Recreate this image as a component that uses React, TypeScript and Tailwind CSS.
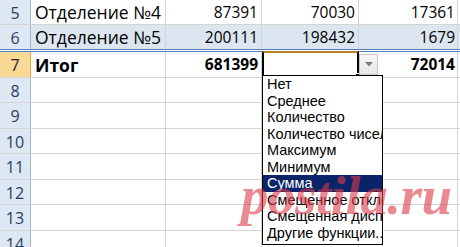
import React from "react";

type Row = {
  n: number;
  h: string;
  b?: string;
  c?: string;
  d?: string;
  e?: string;
};

const rows: Row[] = [
  { n: 5, h: "h-[25px]", b: "Отделение №4", c: "87391", d: "70030", e: "17361" },
  { n: 6, h: "h-[27px]", b: "Отделение №5", c: "200111", d: "198432", e: "1679" },
  { n: 7, h: "h-[26px]" },
  { n: 8, h: "h-[25px]" },
  { n: 9, h: "h-[26px]" },
  { n: 10, h: "h-[25px]" },
  { n: 11, h: "h-[26px]" },
  { n: 12, h: "h-[25px]" },
  { n: 13, h: "h-[26px]" },
  { n: 14, h: "h-[25px]" },
];

const menu = [
  "Нет",
  "Среднее",
  "Количество",
  "Количество чисел",
  "Максимум",
  "Минимум",
  "Сумма",
  "Смещенное отклонение",
  "Смещенная дисперсия",
  "Другие функции...",
];

const cell = "border-r border-[#d4d4d4] flex items-center pt-[1px]";

export default function App() {
  return (
    <div className="relative w-[460px] h-[247px] overflow-hidden bg-white font-['Open_Sans',Arial,sans-serif] text-[15.5px] text-black">
      {rows.map((r) => {
        const total = r.n === 7;
        const band = r.n === 6;
        return (
          <div
            key={r.n}
            className={`flex ${r.h} ${
              band
                ? "border-b-[3px] border-double border-[#4f81bd]"
                : "border-b border-[#d4d4d4]"
            }`}
          >
            {/* row header */}
            <div
              className={`w-[31px] shrink-0 flex items-center justify-center pt-[1px] border-r text-[16px] ${
                total
                  ? "bg-[#f9d995] border-[#e8a53e] text-[#222]"
                  : "bg-[#dde8f4] border-[#9eb6ce] text-[#27405e]"
              }`}
            >
              {r.n}
            </div>
            <div className={`flex flex-1 ${band ? "bg-[#dce6f1]" : ""}`}>
              <div className={`${cell} w-[135px] pl-[4px] text-[17.5px] ${total ? "font-bold" : ""}`}>
                {total ? "Итог" : r.b}
              </div>
              <div className={`${cell} w-[96px] justify-end pr-[3px] ${total ? "font-bold" : ""}`}>
                {total ? "681399" : r.c}
              </div>
              {total ? (
                <div className="relative w-[97px] -mt-[1px] border-2 border-black border-t-[#b8822e]">
                  <div className="absolute right-[-3px] bottom-[-3px] w-[5px] h-[5px] bg-black border border-white" />
                  {/* dropdown button */}
                  <div className="absolute left-[calc(100%+2px)] top-[1px] w-[19px] h-[21px] border border-[#c6c6c6] bg-gradient-to-b from-[#f7f7f7] to-[#e6e6e6] flex items-center justify-center">
                    <svg width="8" height="5" viewBox="0 0 8 5">
                      <path d="M0 0h8L4 4.5z" fill="#7a7a7a" />
                    </svg>
                  </div>
                  {/* function list */}
                  <div className="absolute left-[-2px] top-full z-10 w-[121px] h-[170px] bg-white border border-black overflow-hidden font-['Liberation_Sans',Tahoma,sans-serif] text-[14.5px]">
                    {menu.map((m) => (
                      <div
                        key={m}
                        className={`h-[16.5px] leading-[16.5px] pl-[4px] whitespace-nowrap ${
                          m === "Сумма" ? "bg-[#0a246a] text-white" : ""
                        }`}
                      >
                        {m}
                      </div>
                    ))}
                  </div>
                </div>
              ) : (
                <div className={`${cell} w-[97px] justify-end pr-[3px]`}>{r.d}</div>
              )}
              <div className={`${cell} w-[99px] justify-end pr-[2px] ${total ? "font-bold" : ""}`}>
                {total ? "72014" : r.e}
              </div>
              <div className="flex-1" />
            </div>
          </div>
        );
      })}

      {/* watermark */}
      <div className="absolute left-[241px] top-[168px] z-20 pointer-events-none font-['Liberation_Serif',serif] italic font-bold text-[55px] leading-none text-[#dc3a48]/60 tracking-[-0.5px]">
        postila.ru
      </div>
    </div>
  );
}
